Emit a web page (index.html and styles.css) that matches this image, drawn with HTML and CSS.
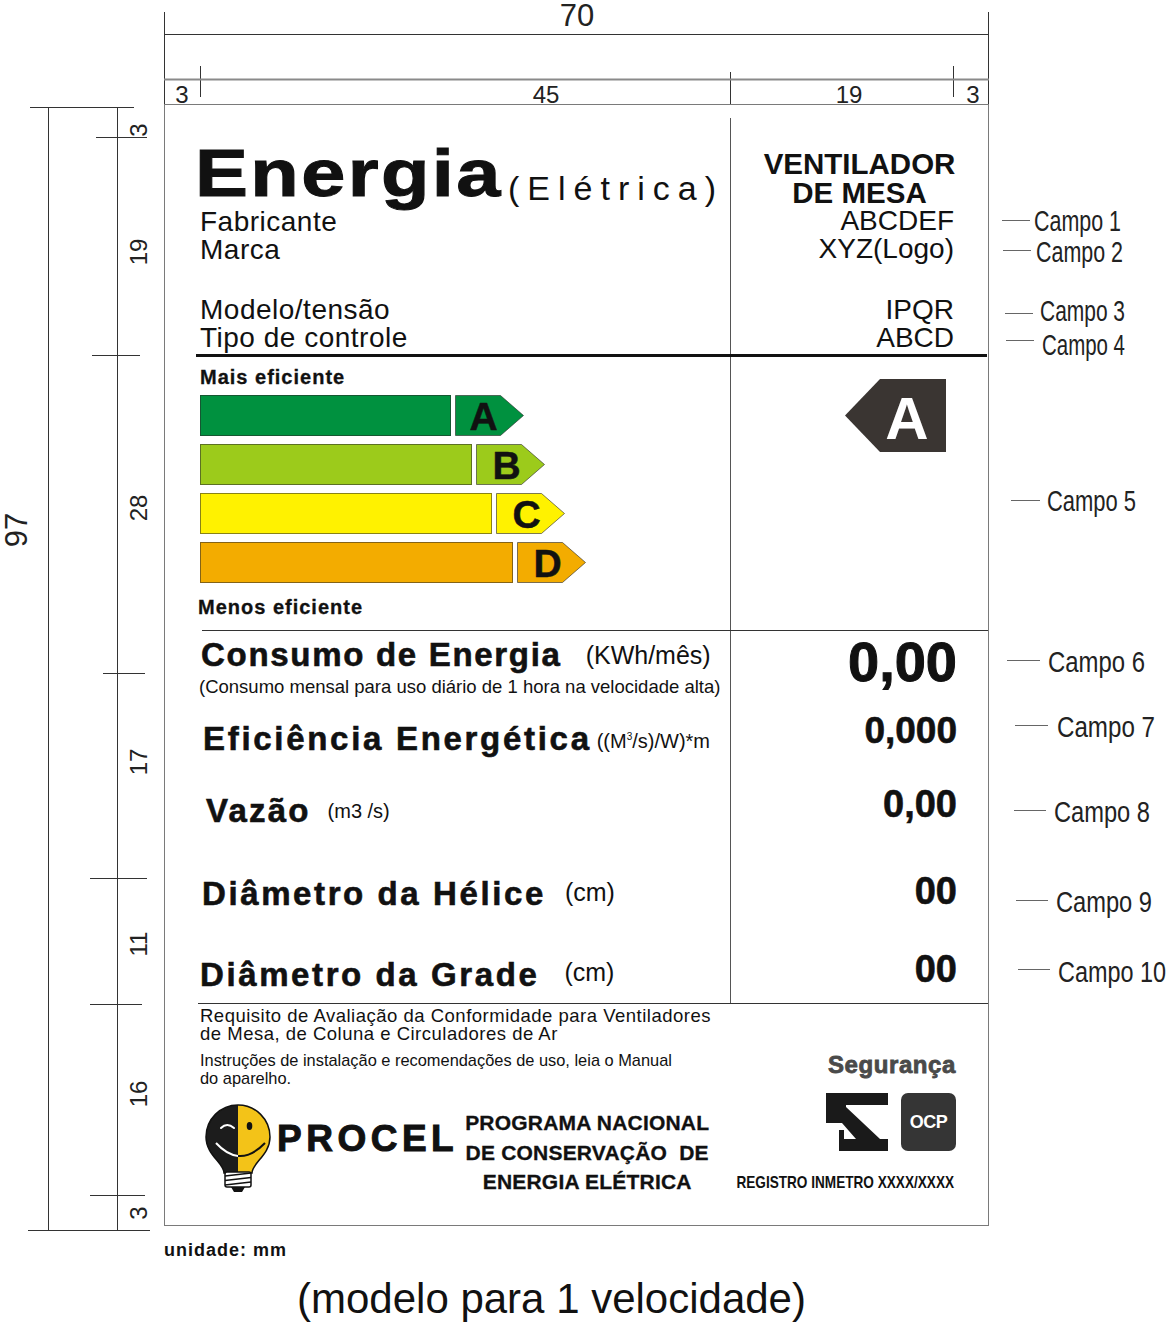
FILE: index.html
```html
<!DOCTYPE html>
<html lang="pt-BR">
<head>
<meta charset="utf-8">
<title>Etiqueta – Ventilador de mesa</title>
<link rel="stylesheet" href="styles.css">
</head>
<body>
<div class="sheet">
  <main class="label">
    <section class="head">
      <div class="head-l">
        <div class="title-line"><span class="energia"><span class="energia-word">Energia</span></span><span class="eletrica">(Elétrica)</span></div>
        <div class="field">Fabricante</div>
        <div class="field">Marca</div>
        <div class="field gap-l">Modelo/tensão</div>
        <div class="field">Tipo de controle</div>
      </div>
      <div class="head-r">
        <div class="kind">VENTILADOR</div>
        <div class="kind">DE MESA</div>
        <div class="field">ABCDEF</div>
        <div class="field">XYZ(Logo)</div>
        <div class="field gap-r">IPQR</div>
        <div class="field">ABCD</div>
      </div>
    </section>
    <div class="rule-thick"></div>
    <section class="scale">
      <div class="scale-l">
        <div class="eff">Mais eficiente</div>
        <div class="bars">
          <div class="bar-row"><div class="bar bar-a"></div><div class="tag"><svg class="tag-bg" width="69" height="41" viewBox="0 0 69 41"><polygon class="tag-shape tag-a" points="0.5,0.5 45.5,0.5 68.5,20.5 45.5,40.5 0.5,40.5"/></svg><span class="tag-letter l-a">A</span></div></div>
          <div class="bar-row"><div class="bar bar-b"></div><div class="tag"><svg class="tag-bg" width="69" height="41" viewBox="0 0 69 41"><polygon class="tag-shape tag-b" points="0.5,0.5 45.5,0.5 68.5,20.5 45.5,40.5 0.5,40.5"/></svg><span class="tag-letter">B</span></div></div>
          <div class="bar-row"><div class="bar bar-c"></div><div class="tag"><svg class="tag-bg" width="69" height="41" viewBox="0 0 69 41"><polygon class="tag-shape tag-c" points="0.5,0.5 45.5,0.5 68.5,20.5 45.5,40.5 0.5,40.5"/></svg><span class="tag-letter">C</span></div></div>
          <div class="bar-row"><div class="bar bar-d"></div><div class="tag"><svg class="tag-bg" width="69" height="41" viewBox="0 0 69 41"><polygon class="tag-shape tag-d" points="0.5,0.5 45.5,0.5 68.5,20.5 45.5,40.5 0.5,40.5"/></svg><span class="tag-letter">D</span></div></div>
        </div>
        <div class="eff eff-low">Menos eficiente</div>
      </div>
      <div class="scale-r">
        <div class="class-arrow"><svg class="class-arrow-bg" width="101" height="73" viewBox="0 0 101 73"><polygon class="class-arrow-shape" points="0,36.5 35,0 101,0 101,73 35,73"/></svg><span class="class-arrow-letter">A</span></div>
      </div>
    </section>
    <div class="rule rule-1"></div>
    <section class="data">
      <div class="dk dk-1">
        <div class="dk-main"><span class="dk-name n-1">Consumo de Energia</span><span class="dk-unit u-1">(KWh/mês)</span></div>
        <div class="dk-sub">(Consumo mensal para uso diário de 1 hora na velocidade alta)</div>
      </div>
      <div class="dv dv-1">0,00</div>
      <div class="dk dk-2"><span class="dk-name n-2">Eficiência Energética</span><span class="dk-unit u-2">((M<sup>3</sup>/s)/W)*m</span></div>
      <div class="dv dv-2">0,000</div>
      <div class="dk dk-3"><span class="dk-name n-3">Vazão</span><span class="dk-unit u-3">(m3 /s)</span></div>
      <div class="dv dv-3">0,00</div>
      <div class="dk dk-4"><span class="dk-name n-4">Diâmetro da Hélice</span><span class="dk-unit u-4">(cm)</span></div>
      <div class="dv dv-4">00</div>
      <div class="dk dk-5"><span class="dk-name n-5">Diâmetro da Grade</span><span class="dk-unit u-5">(cm)</span></div>
      <div class="dv dv-5">00</div>
    </section>
    <div class="rule rule-2"></div>
    <section class="foot">
      <div class="foot-l">
        <p class="req">Requisito de Avaliação da Conformidade para Ventiladores<br>de Mesa, de Coluna e Circuladores de Ar</p>
        <p class="inst">Instruções de instalação e recomendações de uso, leia o Manual<br>do aparelho.</p>
        <div class="procel">
          <svg class="bulb" width="68" height="96" viewBox="0 0 68 96">
            <defs>
              <clipPath id="lhalf"><rect x="0" y="0" width="34" height="96"/></clipPath>
              <clipPath id="rhalf"><rect x="34" y="0" width="34" height="96"/></clipPath>
            </defs>
            <path class="bulb-yellow" d="M20,76 C20,66 2,58 2,40 A32,32 0 1 1 66,40 C66,58 48,66 48,76 Z"/>
            <path class="bulb-black" clip-path="url(#lhalf)" d="M20,76 C20,66 2,58 2,40 A32,32 0 1 1 66,40 C66,58 48,66 48,76 Z"/>
            <path class="bulb-outline" d="M20,76 C20,66 2,58 2,40 A32,32 0 1 1 66,40 C66,58 48,66 48,76 Z"/>
            <path class="wink" d="M17,31 Q23,25 30,31"/>
            <ellipse class="eye" cx="45.5" cy="29" rx="2.8" ry="4"/>
            <path class="smile-w" clip-path="url(#lhalf)" d="M12,46 Q36,72 61,46"/>
            <path class="smile-k" clip-path="url(#rhalf)" d="M12,46 Q36,72 61,46"/>
            <rect class="base" x="21" y="75" width="26" height="15" rx="2"/>
            <path class="thread" d="M21,79 L47,76 M21,83.5 L47,80.5 M21,88 L47,85"/>
            <polygon class="tip" points="27,90 41,90 38,95 30,95"/>
          </svg>
          <div class="procel-name">PROCEL</div>
          <div class="procel-prog">PROGRAMA NACIONAL<br>DE CONSERVAÇÃO&nbsp; DE<br>ENERGIA ELÉTRICA</div>
        </div>
      </div>
      <div class="foot-r">
        <div class="seg">Segurança</div>
        <div class="logos">
          <svg class="inmetro" width="62" height="58" viewBox="0 0 62 58"><path class="inmetro-shape" d="M0,0 H62 V12 H20 V14 L54,46 H62 V58 H13 V46 H30 L16,30 H0 Z"/><rect class="inmetro-shape" x="13" y="37" width="5" height="9"/></svg>
          <div class="ocp">OCP</div>
        </div>
        <div class="reg">REGISTRO INMETRO XXXX/XXXX</div>
      </div>
    </section>
  </main>
  <p class="unit-note">unidade: mm</p>
  <p class="caption">(modelo para 1 velocidade)</p>

  <svg class="drawing" width="1167" height="1322" viewBox="0 0 1167 1322">
    <path class="ln" d="M164.5,12 V104 M988.5,12 V104 M164,34.5 H989 M200.5,66 V97 M730.5,72 V104 M953.5,66 V97
      M48.5,107 V1231 M117.5,107 V1231 M30,107.5 H134 M28,1230.5 H150
      M96,137.5 H147 M92,355.5 H140 M103,673.5 H145 M90,878.5 H147 M90,1004.5 H142 M90,1195.5 H145"/>
    <path class="ln-gray" d="M164,79.5 H989"/>
    <text class="dt dt-lg" x="577" y="26">70</text>
    <text class="dt" x="182" y="103">3</text>
    <text class="dt" x="546" y="103">45</text>
    <text class="dt" x="849" y="103">19</text>
    <text class="dt" x="973" y="103">3</text>
    <text class="dt dt-lg" transform="translate(27 530) rotate(-90)">97</text>
    <text class="dt" transform="translate(147 130) rotate(-90)">3</text>
    <text class="dt" transform="translate(147 252) rotate(-90)">19</text>
    <text class="dt" transform="translate(147 508) rotate(-90)">28</text>
    <text class="dt" transform="translate(147 762) rotate(-90)">17</text>
    <text class="dt" transform="translate(147 944) rotate(-90)">11</text>
    <text class="dt" transform="translate(147 1094) rotate(-90)">16</text>
    <text class="dt" transform="translate(147 1213) rotate(-90)">3</text>

    <path class="ln-campo" d="M1002,220.5 H1030 M1003,250.5 H1031 M1005,313.5 H1033 M1006,340.5 H1034 M1011,500.5 H1040 M1007,660.5 H1040 M1015,725.5 H1048 M1014,810.5 H1046 M1016,900.5 H1048 M1018,969.5 H1050"/>
    <text class="campo" x="1034" y="231" textLength="87" lengthAdjust="spacingAndGlyphs">Campo 1</text>
    <text class="campo" x="1036" y="262" textLength="87" lengthAdjust="spacingAndGlyphs">Campo 2</text>
    <text class="campo" x="1040" y="321" textLength="85" lengthAdjust="spacingAndGlyphs">Campo 3</text>
    <text class="campo" x="1042" y="355" textLength="83" lengthAdjust="spacingAndGlyphs">Campo 4</text>
    <text class="campo" x="1047" y="511" textLength="89" lengthAdjust="spacingAndGlyphs">Campo 5</text>
    <text class="campo" x="1048" y="672" textLength="97" lengthAdjust="spacingAndGlyphs">Campo 6</text>
    <text class="campo" x="1057" y="737" textLength="98" lengthAdjust="spacingAndGlyphs">Campo 7</text>
    <text class="campo" x="1054" y="822" textLength="96" lengthAdjust="spacingAndGlyphs">Campo 8</text>
    <text class="campo" x="1056" y="912" textLength="96" lengthAdjust="spacingAndGlyphs">Campo 9</text>
    <text class="campo" x="1058" y="982" textLength="108" lengthAdjust="spacingAndGlyphs">Campo 10</text>
  </svg>
</div>
</body>
</html>
```

FILE: styles.css
```css
* { box-sizing: border-box; margin: 0; padding: 0; }
html, body { background: #fff; }
body { margin: 0; font-family: "Liberation Sans", Arial, sans-serif; color: #111; }

.sheet { position: relative; width: 1167px; height: 1322px; padding: 104px 0 0 164px; overflow: hidden; }

/* ---------- label ---------- */
.label { width: 825px; height: 1122px; border: 1px solid #7a7a7a; display: flex; flex-direction: column; }

.head { display: grid; grid-template-columns: 565px 258px; height: 249px; }
.head-l { padding: 33px 0 0 35px; }
.title-line { height: 70px; line-height: 70px; font-size: 67px; white-space: nowrap; margin-left: -5px; }
.energia { display: inline-block; width: 313px; font-weight: 700; line-height: 70px; }
.energia-word { display: inline-block; letter-spacing: 2px; -webkit-text-stroke: 1px #111; transform: scaleX(1.185); transform-origin: 0 50%; }
.eletrica { font-size: 34px; letter-spacing: 8px; line-height: 1; vertical-align: -4px; }
.field { font-size: 28px; line-height: 28px; white-space: nowrap; letter-spacing: 0.5px; }
.gap-l { margin-top: 32px; }

.head-r { margin-top: 13px; border-left: 1px solid #555; padding: 31px 34px 0 0; text-align: right; }
.head-r .field { letter-spacing: 0; }
.kind { font-size: 29.5px; font-weight: 700; line-height: 29px; text-align: center; margin-right: -34px; white-space: nowrap; }
.gap-r { margin-top: 33px; }

.rule-thick { height: 3px; background: #111; margin: 0 1px 0 31px; flex: none; }

.scale { display: grid; grid-template-columns: 565px 258px; height: 273px; }
.scale-l { padding: 9px 0 0 35px; }
.scale-r { border-left: 1px solid #555; padding: 22px 0 0 114px; }
.eff { font-size: 20px; font-weight: 700; letter-spacing: 1px; line-height: 22px; white-space: nowrap; -webkit-text-stroke: 0.3px #111; }
.eff-low { margin: 13px 0 0 -2px; }
.bars { margin-top: 7px; display: flex; flex-direction: column; gap: 8px; }
.bar-row { display: flex; gap: 4px; height: 41px; }
.bar { height: 41px; border: 1px solid rgba(40, 40, 40, 0.55); }
.bar-a { width: 251px; background: #00913f; }
.bar-b { width: 272px; background: #9ccb1b; }
.bar-c { width: 292px; background: #fff200; }
.bar-d { width: 313px; background: #f3ac00; }
.tag { position: relative; width: 69px; height: 41px; flex: none; }
.tag-bg { position: absolute; left: 0; top: 0; }
.tag-shape { stroke: rgba(40, 40, 40, 0.6); stroke-width: 1; }
.tag-a { fill: #00913f; }
.tag-b { fill: #9ccb1b; }
.tag-c { fill: #fff200; }
.tag-d { fill: #f3ac00; }
.tag-letter { position: relative; display: block; width: 61px; height: 41px; text-align: center; font-size: 39px; font-weight: 700; line-height: 43px; color: #111; -webkit-text-stroke: 0.5px #111; }
.l-a { width: 57px; }
.class-arrow { position: relative; width: 101px; height: 73px; }
.class-arrow-bg { position: absolute; left: 0; top: 0; }
.class-arrow-shape { fill: #3a3532; }
.class-arrow-letter { position: relative; display: block; width: 124px; height: 73px; text-align: center; font-size: 60px; font-weight: 700; line-height: 80px; color: #fff; }

.rule { height: 1px; background: #333; flex: none; }
.rule-1 { margin-left: 37px; }
.rule-2 { margin-left: 33px; }

.data { display: grid; grid-template-columns: 565px 258px; grid-template-rows: 79px 65px 75px 85px 68px; height: 372px; }
.dk { font-size: 33px; line-height: 36px; white-space: nowrap; }
.dk-name { font-weight: 700; -webkit-text-stroke: 0.6px #111; }
.n-1 { letter-spacing: 1.7px; }
.n-2 { letter-spacing: 2.7px; }
.n-3 { letter-spacing: 2.2px; }
.n-4 { letter-spacing: 2.6px; }
.n-5 { letter-spacing: 2.6px; }
.dk-unit { font-size: 20px; line-height: 1; letter-spacing: 0; }
.dk-unit sup { font-size: 0.5em; line-height: 0; vertical-align: 0.8em; }
.u-1 { font-size: 25px; margin-left: 24px; vertical-align: 2px; }
.u-2 { margin-left: 5px; vertical-align: 2px; }
.u-3 { margin-left: 17px; vertical-align: 4px; }
.u-4 { font-size: 25px; margin-left: 19px; vertical-align: 4px; }
.u-5 { font-size: 25px; margin-left: 25px; vertical-align: 5px; }
.dk-1 { padding: 6px 0 0 36px; }
.dk-2 { padding: 11px 0 0 38px; }
.dk-3 { padding: 18px 0 0 41px; }
.dk-4 { padding: 26px 0 0 37px; }
.dk-5 { padding: 22px 0 0 35px; }
.dk-sub { font-size: 18.5px; line-height: 22px; margin: 3px 0 0 -2px; }

.dv { border-left: 1px solid #555; text-align: right; padding-right: 31px; font-weight: 700; white-space: nowrap; -webkit-text-stroke: 0.6px #111; }
.dv-1 { font-size: 56px; line-height: 56px; padding-top: 3px; -webkit-text-stroke: 1px #111; }
.dv-2 { font-size: 37px; line-height: 40px; padding-top: 1px; }
.dv-3 { font-size: 38px; line-height: 40px; padding-top: 9px; }
.dv-4 { font-size: 38px; line-height: 40px; padding-top: 21px; }
.dv-5 { font-size: 38px; line-height: 40px; padding-top: 14px; }

.foot { display: grid; grid-template-columns: 565px 258px; flex: 1; }
.foot-l { padding: 3px 0 0 35px; }
.req { font-size: 18.5px; letter-spacing: 0.5px; line-height: 18px; white-space: nowrap; }
.inst { font-size: 16.4px; line-height: 18px; margin-top: 8px; white-space: nowrap; }
.procel { display: flex; align-items: flex-start; margin-top: 10px; }
.bulb { display: block; flex: none; margin-left: 4px; }
.bulb-yellow { fill: #f3c318; }
.bulb-black { fill: #1c1c1c; }
.bulb-outline { fill: none; stroke: #111; stroke-width: 1.5; }
.wink { fill: none; stroke: #fff; stroke-width: 2; stroke-linecap: round; }
.eye { fill: #111; }
.smile-w { fill: none; stroke: #fff; stroke-width: 2; }
.smile-k { fill: none; stroke: #111; stroke-width: 2; }
.base { fill: #fff; stroke: #111; stroke-width: 1.5; }
.thread { stroke: #111; stroke-width: 1.6; }
.tip { fill: #111; }
.procel-name { font-size: 37px; font-weight: 700; letter-spacing: 4.5px; line-height: 40px; margin: 22px 0 0 5px; -webkit-text-stroke: 1px #111; }
.procel-prog { width: 252px; font-size: 21px; font-weight: 700; letter-spacing: 0.2px; line-height: 29.5px; text-align: center; margin: 11px 0 0 3px; white-space: nowrap; -webkit-text-stroke: 0.3px #111; }

.foot-r { padding: 48px 32px 0 0; display: flex; flex-direction: column; align-items: flex-end; }
.seg { font-size: 24px; font-weight: 700; color: #4a4a4a; letter-spacing: 0.6px; line-height: 26px; -webkit-text-stroke: 0.8px #4a4a4a; }
.logos { display: flex; gap: 13px; margin-top: 15px; height: 58px; }
.inmetro { display: block; }
.inmetro-shape { fill: #1a1a1a; }
.ocp { width: 55px; height: 58px; border-radius: 7px; background: #353535; color: #fff; font-size: 18px; font-weight: 700; letter-spacing: -0.5px; display: flex; align-items: center; justify-content: center; }
.reg { font-size: 17px; font-weight: 700; line-height: 20px; margin: 22px 2px 0 0; white-space: nowrap; transform: scaleX(0.8); transform-origin: 100% 50%; }

/* ---------- below label ---------- */
.unit-note { margin-top: 14px; font-size: 18px; font-weight: 700; letter-spacing: 1px; line-height: 20px; }
.caption { margin-top: 16px; padding-left: 133px; font-size: 42px; line-height: 46px; white-space: nowrap; }

/* ---------- dimension drawing ---------- */
.drawing { position: absolute; left: 0; top: 0; pointer-events: none; }
.ln { fill: none; stroke: #333; stroke-width: 1; }
.ln-gray { fill: none; stroke: #8a8a8a; stroke-width: 2; }
.ln-campo { fill: none; stroke: #666; stroke-width: 1; }
.dt { font-family: "Liberation Sans", Arial, sans-serif; font-size: 24px; fill: #222; text-anchor: middle; }
.dt-lg { font-size: 31px; }
.campo { font-family: "Liberation Sans", Arial, sans-serif; font-size: 30px; fill: #222; }
```
